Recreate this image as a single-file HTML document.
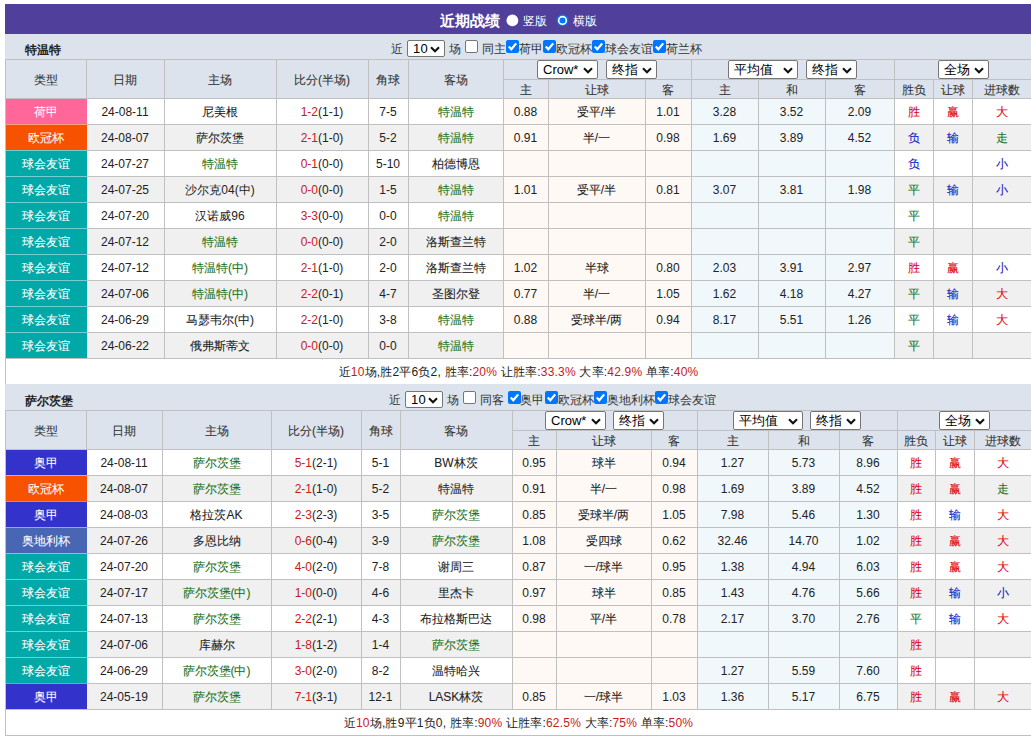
<!DOCTYPE html>
<html><head><meta charset="utf-8"><style>
html,body{margin:0;padding:0;background:#fff;}
body{width:1031px;height:736px;overflow:hidden;position:relative;font-family:"Liberation Sans",sans-serif;font-size:12px;color:#222;}
.r{position:absolute;}
.t{position:absolute;text-align:center;line-height:20px;white-space:nowrap;}
.red{color:#c81a1a;}
.sel{position:absolute;background:#fff;border:1px solid #767676;border-radius:2px;color:#000;}
.sel > span{position:absolute;left:5px;top:0;white-space:nowrap;}
.cb{position:absolute;width:13px;height:13px;box-sizing:border-box;border-radius:2px;}
.cb.off{background:#fff;border:1px solid #767676;}
.cb.on{background:#0075ff;}
.cb svg{position:absolute;left:0;top:0;}
.radio{position:absolute;width:13px;height:13px;box-sizing:border-box;border-radius:50%;background:#fff;border:1px solid #767676;}
.radio.on{border:2px solid #0075ff;background:#fff;}
</style></head><body>
<div class="r" style="left:5px;top:4px;width:1026px;height:30px;background:#51409b;"></div><div class="t" style="left:440px;top:10px;text-align:left;color:#fff;font-size:15px;font-weight:bold;line-height:21px">近期战绩</div><svg class="r" style="left:506px;top:14px" width="13" height="13" viewBox="0 0 13 13"><circle cx="6.4" cy="6.4" r="5.9" fill="#fff"/></svg><div class="t" style="left:523px;top:12px;text-align:left;color:#fff;line-height:18px">竖版</div><svg class="r" style="left:556px;top:14px" width="13" height="13" viewBox="0 0 13 13"><circle cx="6.5" cy="6.4" r="5.9" fill="#0075ff"/><circle cx="6.5" cy="6.4" r="4.6" fill="#fff"/><circle cx="6.5" cy="6.4" r="3" fill="#0075ff"/></svg><div class="t" style="left:573px;top:12px;text-align:left;color:#fff;line-height:18px">横版</div><div class="r" style="left:5px;top:34px;width:1026px;height:25px;background:#dce3ec;"></div><div class="t" style="left:25px;top:40.0px;text-align:left;font-weight:bold;color:#222">特温特</div><div class="t" style="left:391px;top:40.0px;text-align:left;line-height:18px;color:#333">近</div><div class="sel" style="left:407px;top:40px;width:36px;height:15px;"><span style="font-size:13px;line-height:15px"><span style="letter-spacing:0.3px">10</span></span><svg width="10" height="7" viewBox="0 0 10 7" style="position:absolute;right:4px;top:4.5px"><polyline points="1,1.2 5,5.2 9,1.2" fill="none" stroke="#111" stroke-width="2.1"/></svg></div><div class="t" style="left:449px;top:40.0px;text-align:left;line-height:18px;color:#333">场</div><div class="cb off" style="left:465px;top:40px"></div><div class="t" style="left:482px;top:40.0px;text-align:left;line-height:18px;color:#333">同主</div><div class="cb on" style="left:506px;top:40px"><svg width="13" height="13" viewBox="0 0 13 13"><polyline points="2.8,6.6 5.3,9.3 10.2,3.4" fill="none" stroke="#fff" stroke-width="2.2"/></svg></div><div class="t" style="left:519px;top:40.0px;text-align:left;line-height:18px;color:#333">荷甲</div><div class="cb on" style="left:543px;top:40px"><svg width="13" height="13" viewBox="0 0 13 13"><polyline points="2.8,6.6 5.3,9.3 10.2,3.4" fill="none" stroke="#fff" stroke-width="2.2"/></svg></div><div class="t" style="left:556px;top:40.0px;text-align:left;line-height:18px;color:#333">欧冠杯</div><div class="cb on" style="left:592px;top:40px"><svg width="13" height="13" viewBox="0 0 13 13"><polyline points="2.8,6.6 5.3,9.3 10.2,3.4" fill="none" stroke="#fff" stroke-width="2.2"/></svg></div><div class="t" style="left:605px;top:40.0px;text-align:left;line-height:18px;color:#333">球会友谊</div><div class="cb on" style="left:653px;top:40px"><svg width="13" height="13" viewBox="0 0 13 13"><polyline points="2.8,6.6 5.3,9.3 10.2,3.4" fill="none" stroke="#fff" stroke-width="2.2"/></svg></div><div class="t" style="left:666px;top:40.0px;text-align:left;line-height:18px;color:#333">荷兰杯</div><div class="r" style="left:5px;top:59px;width:1026px;height:39px;background:#dce3ec;"></div><div class="r" style="left:86px;top:98px;width:417px;height:26px;background:#ffffff;"></div><div class="r" style="left:503px;top:98px;width:188px;height:26px;background:#fff9f5;"></div><div class="r" style="left:691px;top:98px;width:203px;height:26px;background:#f0f8fc;"></div><div class="r" style="left:894px;top:98px;width:137px;height:26px;background:#ffffff;"></div><div class="r" style="left:5px;top:98px;width:82px;height:27px;background:#ff6699;"></div><div class="r" style="left:86px;top:124px;width:417px;height:26px;background:#f0f0f0;"></div><div class="r" style="left:503px;top:124px;width:188px;height:26px;background:#fff9f5;"></div><div class="r" style="left:691px;top:124px;width:203px;height:26px;background:#f0f8fc;"></div><div class="r" style="left:894px;top:124px;width:137px;height:26px;background:#f0f0f0;"></div><div class="r" style="left:5px;top:124px;width:82px;height:27px;background:#f75200;"></div><div class="r" style="left:86px;top:150px;width:417px;height:26px;background:#ffffff;"></div><div class="r" style="left:503px;top:150px;width:188px;height:26px;background:#fff9f5;"></div><div class="r" style="left:691px;top:150px;width:203px;height:26px;background:#f0f8fc;"></div><div class="r" style="left:894px;top:150px;width:137px;height:26px;background:#ffffff;"></div><div class="r" style="left:5px;top:150px;width:82px;height:27px;background:#00a8a8;"></div><div class="r" style="left:86px;top:176px;width:417px;height:26px;background:#f0f0f0;"></div><div class="r" style="left:503px;top:176px;width:188px;height:26px;background:#fff9f5;"></div><div class="r" style="left:691px;top:176px;width:203px;height:26px;background:#f0f8fc;"></div><div class="r" style="left:894px;top:176px;width:137px;height:26px;background:#f0f0f0;"></div><div class="r" style="left:5px;top:176px;width:82px;height:27px;background:#00a8a8;"></div><div class="r" style="left:86px;top:202px;width:417px;height:26px;background:#ffffff;"></div><div class="r" style="left:503px;top:202px;width:188px;height:26px;background:#fff9f5;"></div><div class="r" style="left:691px;top:202px;width:203px;height:26px;background:#f0f8fc;"></div><div class="r" style="left:894px;top:202px;width:137px;height:26px;background:#ffffff;"></div><div class="r" style="left:5px;top:202px;width:82px;height:27px;background:#00a8a8;"></div><div class="r" style="left:86px;top:228px;width:417px;height:26px;background:#f0f0f0;"></div><div class="r" style="left:503px;top:228px;width:188px;height:26px;background:#fff9f5;"></div><div class="r" style="left:691px;top:228px;width:203px;height:26px;background:#f0f8fc;"></div><div class="r" style="left:894px;top:228px;width:137px;height:26px;background:#f0f0f0;"></div><div class="r" style="left:5px;top:228px;width:82px;height:27px;background:#00a8a8;"></div><div class="r" style="left:86px;top:254px;width:417px;height:26px;background:#ffffff;"></div><div class="r" style="left:503px;top:254px;width:188px;height:26px;background:#fff9f5;"></div><div class="r" style="left:691px;top:254px;width:203px;height:26px;background:#f0f8fc;"></div><div class="r" style="left:894px;top:254px;width:137px;height:26px;background:#ffffff;"></div><div class="r" style="left:5px;top:254px;width:82px;height:27px;background:#00a8a8;"></div><div class="r" style="left:86px;top:280px;width:417px;height:26px;background:#f0f0f0;"></div><div class="r" style="left:503px;top:280px;width:188px;height:26px;background:#fff9f5;"></div><div class="r" style="left:691px;top:280px;width:203px;height:26px;background:#f0f8fc;"></div><div class="r" style="left:894px;top:280px;width:137px;height:26px;background:#f0f0f0;"></div><div class="r" style="left:5px;top:280px;width:82px;height:27px;background:#00a8a8;"></div><div class="r" style="left:86px;top:306px;width:417px;height:26px;background:#ffffff;"></div><div class="r" style="left:503px;top:306px;width:188px;height:26px;background:#fff9f5;"></div><div class="r" style="left:691px;top:306px;width:203px;height:26px;background:#f0f8fc;"></div><div class="r" style="left:894px;top:306px;width:137px;height:26px;background:#ffffff;"></div><div class="r" style="left:5px;top:306px;width:82px;height:27px;background:#00a8a8;"></div><div class="r" style="left:86px;top:332px;width:417px;height:26px;background:#f0f0f0;"></div><div class="r" style="left:503px;top:332px;width:188px;height:26px;background:#fff9f5;"></div><div class="r" style="left:691px;top:332px;width:203px;height:26px;background:#f0f8fc;"></div><div class="r" style="left:894px;top:332px;width:137px;height:26px;background:#f0f0f0;"></div><div class="r" style="left:5px;top:332px;width:82px;height:27px;background:#00a8a8;"></div><div class="r" style="left:5px;top:59px;width:1026px;height:1px;background:#c0c0c0"></div><div class="r" style="left:503px;top:79px;width:528px;height:1px;background:#c0c0c0"></div><div class="r" style="left:5px;top:98px;width:1026px;height:1px;background:#c0c0c0"></div><div class="r" style="left:5px;top:124px;width:1026px;height:1px;background:#c0c0c0"></div><div class="r" style="left:5px;top:150px;width:1026px;height:1px;background:#c0c0c0"></div><div class="r" style="left:5px;top:176px;width:1026px;height:1px;background:#c0c0c0"></div><div class="r" style="left:5px;top:202px;width:1026px;height:1px;background:#c0c0c0"></div><div class="r" style="left:5px;top:228px;width:1026px;height:1px;background:#c0c0c0"></div><div class="r" style="left:5px;top:254px;width:1026px;height:1px;background:#c0c0c0"></div><div class="r" style="left:5px;top:280px;width:1026px;height:1px;background:#c0c0c0"></div><div class="r" style="left:5px;top:306px;width:1026px;height:1px;background:#c0c0c0"></div><div class="r" style="left:5px;top:332px;width:1026px;height:1px;background:#c0c0c0"></div><div class="r" style="left:5px;top:358px;width:1026px;height:1px;background:#c0c0c0"></div><div class="r" style="left:5px;top:384px;width:1026px;height:1px;background:#c0c0c0"></div><div class="r" style="left:5px;top:59px;width:1px;height:326px;background:#c0c0c0"></div><div class="r" style="left:86px;top:59px;width:1px;height:299px;background:#c0c0c0"></div><div class="r" style="left:164px;top:59px;width:1px;height:299px;background:#c0c0c0"></div><div class="r" style="left:276px;top:59px;width:1px;height:299px;background:#c0c0c0"></div><div class="r" style="left:368px;top:59px;width:1px;height:299px;background:#c0c0c0"></div><div class="r" style="left:408px;top:59px;width:1px;height:299px;background:#c0c0c0"></div><div class="r" style="left:503px;top:59px;width:1px;height:299px;background:#c0c0c0"></div><div class="r" style="left:548px;top:79px;width:1px;height:279px;background:#c0c0c0"></div><div class="r" style="left:645px;top:79px;width:1px;height:279px;background:#c0c0c0"></div><div class="r" style="left:691px;top:59px;width:1px;height:299px;background:#c0c0c0"></div><div class="r" style="left:758px;top:79px;width:1px;height:279px;background:#c0c0c0"></div><div class="r" style="left:825px;top:79px;width:1px;height:279px;background:#c0c0c0"></div><div class="r" style="left:894px;top:59px;width:1px;height:299px;background:#c0c0c0"></div><div class="r" style="left:933px;top:79px;width:1px;height:279px;background:#c0c0c0"></div><div class="r" style="left:972px;top:79px;width:1px;height:279px;background:#c0c0c0"></div><div class="r" style="left:6px;top:99px;width:81px;height:25px;background:#ff6699;"></div><div class="r" style="left:6px;top:125px;width:81px;height:25px;background:#f75200;"></div><div class="r" style="left:6px;top:124px;width:81px;height:1px;background:#f75200;"></div><div class="r" style="left:6px;top:124px;width:81px;height:1px;background:rgba(255,255,255,0.45);"></div><div class="r" style="left:6px;top:151px;width:81px;height:25px;background:#00a8a8;"></div><div class="r" style="left:6px;top:150px;width:81px;height:1px;background:#00a8a8;"></div><div class="r" style="left:6px;top:150px;width:81px;height:1px;background:rgba(255,255,255,0.45);"></div><div class="r" style="left:6px;top:177px;width:81px;height:25px;background:#00a8a8;"></div><div class="r" style="left:6px;top:176px;width:81px;height:1px;background:#00a8a8;"></div><div class="r" style="left:6px;top:176px;width:81px;height:1px;background:rgba(255,255,255,0.45);"></div><div class="r" style="left:6px;top:203px;width:81px;height:25px;background:#00a8a8;"></div><div class="r" style="left:6px;top:202px;width:81px;height:1px;background:#00a8a8;"></div><div class="r" style="left:6px;top:202px;width:81px;height:1px;background:rgba(255,255,255,0.45);"></div><div class="r" style="left:6px;top:229px;width:81px;height:25px;background:#00a8a8;"></div><div class="r" style="left:6px;top:228px;width:81px;height:1px;background:#00a8a8;"></div><div class="r" style="left:6px;top:228px;width:81px;height:1px;background:rgba(255,255,255,0.45);"></div><div class="r" style="left:6px;top:255px;width:81px;height:25px;background:#00a8a8;"></div><div class="r" style="left:6px;top:254px;width:81px;height:1px;background:#00a8a8;"></div><div class="r" style="left:6px;top:254px;width:81px;height:1px;background:rgba(255,255,255,0.45);"></div><div class="r" style="left:6px;top:281px;width:81px;height:25px;background:#00a8a8;"></div><div class="r" style="left:6px;top:280px;width:81px;height:1px;background:#00a8a8;"></div><div class="r" style="left:6px;top:280px;width:81px;height:1px;background:rgba(255,255,255,0.45);"></div><div class="r" style="left:6px;top:307px;width:81px;height:25px;background:#00a8a8;"></div><div class="r" style="left:6px;top:306px;width:81px;height:1px;background:#00a8a8;"></div><div class="r" style="left:6px;top:306px;width:81px;height:1px;background:rgba(255,255,255,0.45);"></div><div class="r" style="left:6px;top:333px;width:81px;height:25px;background:#00a8a8;"></div><div class="r" style="left:6px;top:332px;width:81px;height:1px;background:#00a8a8;"></div><div class="r" style="left:6px;top:332px;width:81px;height:1px;background:rgba(255,255,255,0.45);"></div><div class="t" style="left:-154.5px;top:69.5px;width:400px;color:#333;-webkit-text-stroke:0.08px currentColor">类型</div><div class="t" style="left:-75.0px;top:69.5px;width:400px;color:#333;-webkit-text-stroke:0.08px currentColor">日期</div><div class="t" style="left:20.0px;top:69.5px;width:400px;color:#333;-webkit-text-stroke:0.08px currentColor">主场</div><div class="t" style="left:122.0px;top:69.5px;width:400px;color:#333;-webkit-text-stroke:0.08px currentColor">比分(半场)</div><div class="t" style="left:188.0px;top:69.5px;width:400px;color:#333;-webkit-text-stroke:0.08px currentColor">角球</div><div class="t" style="left:255.5px;top:69.5px;width:400px;color:#333;-webkit-text-stroke:0.08px currentColor">客场</div><div class="t" style="left:325.5px;top:79.5px;width:400px;color:#333;-webkit-text-stroke:0.08px currentColor">主</div><div class="t" style="left:396.5px;top:79.5px;width:400px;color:#333;-webkit-text-stroke:0.08px currentColor">让球</div><div class="t" style="left:468.0px;top:79.5px;width:400px;color:#333;-webkit-text-stroke:0.08px currentColor">客</div><div class="t" style="left:524.5px;top:79.5px;width:400px;color:#333;-webkit-text-stroke:0.08px currentColor">主</div><div class="t" style="left:591.5px;top:79.5px;width:400px;color:#333;-webkit-text-stroke:0.08px currentColor">和</div><div class="t" style="left:659.5px;top:79.5px;width:400px;color:#333;-webkit-text-stroke:0.08px currentColor">客</div><div class="t" style="left:713.5px;top:79.5px;width:400px;color:#333;-webkit-text-stroke:0.08px currentColor">胜负</div><div class="t" style="left:752.5px;top:79.5px;width:400px;color:#333;-webkit-text-stroke:0.08px currentColor">让球</div><div class="t" style="left:802.0px;top:79.5px;width:400px;color:#333;-webkit-text-stroke:0.08px currentColor">进球数</div><div class="sel" style="left:537px;top:60px;width:59px;height:17px;"><span style="font-size:13px;line-height:17px">Crow*</span><svg width="10" height="7" viewBox="0 0 10 7" style="position:absolute;right:4px;top:5.5px"><polyline points="1,1.2 5,5.2 9,1.2" fill="none" stroke="#111" stroke-width="2.1"/></svg></div><div class="sel" style="left:606px;top:60px;width:49px;height:17px;"><span style="font-size:13px;line-height:17px">终指</span><svg width="10" height="7" viewBox="0 0 10 7" style="position:absolute;right:4px;top:5.5px"><polyline points="1,1.2 5,5.2 9,1.2" fill="none" stroke="#111" stroke-width="2.1"/></svg></div><div class="sel" style="left:728px;top:60px;width:68px;height:17px;"><span style="font-size:13px;line-height:17px">平均值</span><svg width="10" height="7" viewBox="0 0 10 7" style="position:absolute;right:4px;top:5.5px"><polyline points="1,1.2 5,5.2 9,1.2" fill="none" stroke="#111" stroke-width="2.1"/></svg></div><div class="sel" style="left:806px;top:60px;width:49px;height:17px;"><span style="font-size:13px;line-height:17px">终指</span><svg width="10" height="7" viewBox="0 0 10 7" style="position:absolute;right:4px;top:5.5px"><polyline points="1,1.2 5,5.2 9,1.2" fill="none" stroke="#111" stroke-width="2.1"/></svg></div><div class="sel" style="left:938px;top:60px;width:49px;height:17px;"><span style="font-size:13px;line-height:17px">全场</span><svg width="10" height="7" viewBox="0 0 10 7" style="position:absolute;right:4px;top:5.5px"><polyline points="1,1.2 5,5.2 9,1.2" fill="none" stroke="#111" stroke-width="2.1"/></svg></div><div class="t" style="left:-154.5px;top:102.0px;width:400px;color:#fff;-webkit-text-stroke:0.08px currentColor">荷甲</div><div class="t" style="left:-75.0px;top:102.0px;width:400px;">24-08-11</div><div class="t" style="left:20.0px;top:102.0px;width:400px;;-webkit-text-stroke:0.08px currentColor">尼美根</div><div class="t" style="left:122.0px;top:102.0px;width:400px;"><span style="color:#c81a1a">1-2</span>(1-1)</div><div class="t" style="left:188.0px;top:102.0px;width:400px;">7-5</div><div class="t" style="left:255.5px;top:102.0px;width:400px;color:#187018;-webkit-text-stroke:0.08px currentColor">特温特</div><div class="t" style="left:325.5px;top:102.0px;width:400px;">0.88</div><div class="t" style="left:396.5px;top:102.0px;width:400px;;-webkit-text-stroke:0.08px currentColor">受平/半</div><div class="t" style="left:468.0px;top:102.0px;width:400px;">1.01</div><div class="t" style="left:524.5px;top:102.0px;width:400px;">3.28</div><div class="t" style="left:591.5px;top:102.0px;width:400px;">3.52</div><div class="t" style="left:659.5px;top:102.0px;width:400px;">2.09</div><div class="t" style="left:713.5px;top:102.0px;width:400px;color:#e00000;-webkit-text-stroke:0.08px currentColor">胜</div><div class="t" style="left:752.5px;top:102.0px;width:400px;color:#e00000;-webkit-text-stroke:0.08px currentColor">赢</div><div class="t" style="left:802.0px;top:102.0px;width:400px;color:#e00000;-webkit-text-stroke:0.08px currentColor">大</div><div class="t" style="left:-154.5px;top:128.0px;width:400px;color:#fff;-webkit-text-stroke:0.08px currentColor">欧冠杯</div><div class="t" style="left:-75.0px;top:128.0px;width:400px;">24-08-07</div><div class="t" style="left:20.0px;top:128.0px;width:400px;;-webkit-text-stroke:0.08px currentColor">萨尔茨堡</div><div class="t" style="left:122.0px;top:128.0px;width:400px;"><span style="color:#c81a1a">2-1</span>(1-0)</div><div class="t" style="left:188.0px;top:128.0px;width:400px;">5-2</div><div class="t" style="left:255.5px;top:128.0px;width:400px;color:#187018;-webkit-text-stroke:0.08px currentColor">特温特</div><div class="t" style="left:325.5px;top:128.0px;width:400px;">0.91</div><div class="t" style="left:396.5px;top:128.0px;width:400px;;-webkit-text-stroke:0.08px currentColor">半/一</div><div class="t" style="left:468.0px;top:128.0px;width:400px;">0.98</div><div class="t" style="left:524.5px;top:128.0px;width:400px;">1.69</div><div class="t" style="left:591.5px;top:128.0px;width:400px;">3.89</div><div class="t" style="left:659.5px;top:128.0px;width:400px;">4.52</div><div class="t" style="left:713.5px;top:128.0px;width:400px;color:#1414c8;-webkit-text-stroke:0.08px currentColor">负</div><div class="t" style="left:752.5px;top:128.0px;width:400px;color:#1414c8;-webkit-text-stroke:0.08px currentColor">输</div><div class="t" style="left:802.0px;top:128.0px;width:400px;color:#187018;-webkit-text-stroke:0.08px currentColor">走</div><div class="t" style="left:-154.5px;top:154.0px;width:400px;color:#fff;-webkit-text-stroke:0.08px currentColor">球会友谊</div><div class="t" style="left:-75.0px;top:154.0px;width:400px;">24-07-27</div><div class="t" style="left:20.0px;top:154.0px;width:400px;color:#187018;-webkit-text-stroke:0.08px currentColor">特温特</div><div class="t" style="left:122.0px;top:154.0px;width:400px;"><span style="color:#c81a1a">0-1</span>(0-0)</div><div class="t" style="left:188.0px;top:154.0px;width:400px;">5-10</div><div class="t" style="left:255.5px;top:154.0px;width:400px;;-webkit-text-stroke:0.08px currentColor">柏德博恩</div><div class="t" style="left:325.5px;top:154.0px;width:400px;"></div><div class="t" style="left:396.5px;top:154.0px;width:400px;"></div><div class="t" style="left:468.0px;top:154.0px;width:400px;"></div><div class="t" style="left:524.5px;top:154.0px;width:400px;"></div><div class="t" style="left:591.5px;top:154.0px;width:400px;"></div><div class="t" style="left:659.5px;top:154.0px;width:400px;"></div><div class="t" style="left:713.5px;top:154.0px;width:400px;color:#1414c8;-webkit-text-stroke:0.08px currentColor">负</div><div class="t" style="left:802.0px;top:154.0px;width:400px;color:#1414c8;-webkit-text-stroke:0.08px currentColor">小</div><div class="t" style="left:-154.5px;top:180.0px;width:400px;color:#fff;-webkit-text-stroke:0.08px currentColor">球会友谊</div><div class="t" style="left:-75.0px;top:180.0px;width:400px;">24-07-25</div><div class="t" style="left:20.0px;top:180.0px;width:400px;">沙尔克04(中)</div><div class="t" style="left:122.0px;top:180.0px;width:400px;"><span style="color:#c81a1a">0-0</span>(0-0)</div><div class="t" style="left:188.0px;top:180.0px;width:400px;">1-5</div><div class="t" style="left:255.5px;top:180.0px;width:400px;color:#187018;-webkit-text-stroke:0.08px currentColor">特温特</div><div class="t" style="left:325.5px;top:180.0px;width:400px;">1.01</div><div class="t" style="left:396.5px;top:180.0px;width:400px;;-webkit-text-stroke:0.08px currentColor">受平/半</div><div class="t" style="left:468.0px;top:180.0px;width:400px;">0.81</div><div class="t" style="left:524.5px;top:180.0px;width:400px;">3.07</div><div class="t" style="left:591.5px;top:180.0px;width:400px;">3.81</div><div class="t" style="left:659.5px;top:180.0px;width:400px;">1.98</div><div class="t" style="left:713.5px;top:180.0px;width:400px;color:#187018;-webkit-text-stroke:0.08px currentColor">平</div><div class="t" style="left:752.5px;top:180.0px;width:400px;color:#1414c8;-webkit-text-stroke:0.08px currentColor">输</div><div class="t" style="left:802.0px;top:180.0px;width:400px;color:#1414c8;-webkit-text-stroke:0.08px currentColor">小</div><div class="t" style="left:-154.5px;top:206.0px;width:400px;color:#fff;-webkit-text-stroke:0.08px currentColor">球会友谊</div><div class="t" style="left:-75.0px;top:206.0px;width:400px;">24-07-20</div><div class="t" style="left:20.0px;top:206.0px;width:400px;">汉诺威96</div><div class="t" style="left:122.0px;top:206.0px;width:400px;"><span style="color:#c81a1a">3-3</span>(0-0)</div><div class="t" style="left:188.0px;top:206.0px;width:400px;">0-0</div><div class="t" style="left:255.5px;top:206.0px;width:400px;color:#187018;-webkit-text-stroke:0.08px currentColor">特温特</div><div class="t" style="left:325.5px;top:206.0px;width:400px;"></div><div class="t" style="left:396.5px;top:206.0px;width:400px;"></div><div class="t" style="left:468.0px;top:206.0px;width:400px;"></div><div class="t" style="left:524.5px;top:206.0px;width:400px;"></div><div class="t" style="left:591.5px;top:206.0px;width:400px;"></div><div class="t" style="left:659.5px;top:206.0px;width:400px;"></div><div class="t" style="left:713.5px;top:206.0px;width:400px;color:#187018;-webkit-text-stroke:0.08px currentColor">平</div><div class="t" style="left:-154.5px;top:232.0px;width:400px;color:#fff;-webkit-text-stroke:0.08px currentColor">球会友谊</div><div class="t" style="left:-75.0px;top:232.0px;width:400px;">24-07-12</div><div class="t" style="left:20.0px;top:232.0px;width:400px;color:#187018;-webkit-text-stroke:0.08px currentColor">特温特</div><div class="t" style="left:122.0px;top:232.0px;width:400px;"><span style="color:#c81a1a">0-0</span>(0-0)</div><div class="t" style="left:188.0px;top:232.0px;width:400px;">2-0</div><div class="t" style="left:255.5px;top:232.0px;width:400px;;-webkit-text-stroke:0.08px currentColor">洛斯查兰特</div><div class="t" style="left:325.5px;top:232.0px;width:400px;"></div><div class="t" style="left:396.5px;top:232.0px;width:400px;"></div><div class="t" style="left:468.0px;top:232.0px;width:400px;"></div><div class="t" style="left:524.5px;top:232.0px;width:400px;"></div><div class="t" style="left:591.5px;top:232.0px;width:400px;"></div><div class="t" style="left:659.5px;top:232.0px;width:400px;"></div><div class="t" style="left:713.5px;top:232.0px;width:400px;color:#187018;-webkit-text-stroke:0.08px currentColor">平</div><div class="t" style="left:-154.5px;top:258.0px;width:400px;color:#fff;-webkit-text-stroke:0.08px currentColor">球会友谊</div><div class="t" style="left:-75.0px;top:258.0px;width:400px;">24-07-12</div><div class="t" style="left:20.0px;top:258.0px;width:400px;color:#187018;-webkit-text-stroke:0.08px currentColor">特温特(中)</div><div class="t" style="left:122.0px;top:258.0px;width:400px;"><span style="color:#c81a1a">2-1</span>(1-0)</div><div class="t" style="left:188.0px;top:258.0px;width:400px;">2-0</div><div class="t" style="left:255.5px;top:258.0px;width:400px;;-webkit-text-stroke:0.08px currentColor">洛斯查兰特</div><div class="t" style="left:325.5px;top:258.0px;width:400px;">1.02</div><div class="t" style="left:396.5px;top:258.0px;width:400px;;-webkit-text-stroke:0.08px currentColor">半球</div><div class="t" style="left:468.0px;top:258.0px;width:400px;">0.80</div><div class="t" style="left:524.5px;top:258.0px;width:400px;">2.03</div><div class="t" style="left:591.5px;top:258.0px;width:400px;">3.91</div><div class="t" style="left:659.5px;top:258.0px;width:400px;">2.97</div><div class="t" style="left:713.5px;top:258.0px;width:400px;color:#e00000;-webkit-text-stroke:0.08px currentColor">胜</div><div class="t" style="left:752.5px;top:258.0px;width:400px;color:#e00000;-webkit-text-stroke:0.08px currentColor">赢</div><div class="t" style="left:802.0px;top:258.0px;width:400px;color:#1414c8;-webkit-text-stroke:0.08px currentColor">小</div><div class="t" style="left:-154.5px;top:284.0px;width:400px;color:#fff;-webkit-text-stroke:0.08px currentColor">球会友谊</div><div class="t" style="left:-75.0px;top:284.0px;width:400px;">24-07-06</div><div class="t" style="left:20.0px;top:284.0px;width:400px;color:#187018;-webkit-text-stroke:0.08px currentColor">特温特(中)</div><div class="t" style="left:122.0px;top:284.0px;width:400px;"><span style="color:#c81a1a">2-2</span>(0-1)</div><div class="t" style="left:188.0px;top:284.0px;width:400px;">4-7</div><div class="t" style="left:255.5px;top:284.0px;width:400px;;-webkit-text-stroke:0.08px currentColor">圣图尔登</div><div class="t" style="left:325.5px;top:284.0px;width:400px;">0.77</div><div class="t" style="left:396.5px;top:284.0px;width:400px;;-webkit-text-stroke:0.08px currentColor">半/一</div><div class="t" style="left:468.0px;top:284.0px;width:400px;">1.05</div><div class="t" style="left:524.5px;top:284.0px;width:400px;">1.62</div><div class="t" style="left:591.5px;top:284.0px;width:400px;">4.18</div><div class="t" style="left:659.5px;top:284.0px;width:400px;">4.27</div><div class="t" style="left:713.5px;top:284.0px;width:400px;color:#187018;-webkit-text-stroke:0.08px currentColor">平</div><div class="t" style="left:752.5px;top:284.0px;width:400px;color:#1414c8;-webkit-text-stroke:0.08px currentColor">输</div><div class="t" style="left:802.0px;top:284.0px;width:400px;color:#e00000;-webkit-text-stroke:0.08px currentColor">大</div><div class="t" style="left:-154.5px;top:310.0px;width:400px;color:#fff;-webkit-text-stroke:0.08px currentColor">球会友谊</div><div class="t" style="left:-75.0px;top:310.0px;width:400px;">24-06-29</div><div class="t" style="left:20.0px;top:310.0px;width:400px;;-webkit-text-stroke:0.08px currentColor">马瑟韦尔(中)</div><div class="t" style="left:122.0px;top:310.0px;width:400px;"><span style="color:#c81a1a">2-2</span>(1-0)</div><div class="t" style="left:188.0px;top:310.0px;width:400px;">3-8</div><div class="t" style="left:255.5px;top:310.0px;width:400px;color:#187018;-webkit-text-stroke:0.08px currentColor">特温特</div><div class="t" style="left:325.5px;top:310.0px;width:400px;">0.88</div><div class="t" style="left:396.5px;top:310.0px;width:400px;;-webkit-text-stroke:0.08px currentColor">受球半/两</div><div class="t" style="left:468.0px;top:310.0px;width:400px;">0.94</div><div class="t" style="left:524.5px;top:310.0px;width:400px;">8.17</div><div class="t" style="left:591.5px;top:310.0px;width:400px;">5.51</div><div class="t" style="left:659.5px;top:310.0px;width:400px;">1.26</div><div class="t" style="left:713.5px;top:310.0px;width:400px;color:#187018;-webkit-text-stroke:0.08px currentColor">平</div><div class="t" style="left:752.5px;top:310.0px;width:400px;color:#1414c8;-webkit-text-stroke:0.08px currentColor">输</div><div class="t" style="left:802.0px;top:310.0px;width:400px;color:#e00000;-webkit-text-stroke:0.08px currentColor">大</div><div class="t" style="left:-154.5px;top:336.0px;width:400px;color:#fff;-webkit-text-stroke:0.08px currentColor">球会友谊</div><div class="t" style="left:-75.0px;top:336.0px;width:400px;">24-06-22</div><div class="t" style="left:20.0px;top:336.0px;width:400px;;-webkit-text-stroke:0.08px currentColor">俄弗斯蒂文</div><div class="t" style="left:122.0px;top:336.0px;width:400px;"><span style="color:#c81a1a">0-0</span>(0-0)</div><div class="t" style="left:188.0px;top:336.0px;width:400px;">0-0</div><div class="t" style="left:255.5px;top:336.0px;width:400px;color:#187018;-webkit-text-stroke:0.08px currentColor">特温特</div><div class="t" style="left:325.5px;top:336.0px;width:400px;"></div><div class="t" style="left:396.5px;top:336.0px;width:400px;"></div><div class="t" style="left:468.0px;top:336.0px;width:400px;"></div><div class="t" style="left:524.5px;top:336.0px;width:400px;"></div><div class="t" style="left:591.5px;top:336.0px;width:400px;"></div><div class="t" style="left:659.5px;top:336.0px;width:400px;"></div><div class="t" style="left:713.5px;top:336.0px;width:400px;color:#187018;-webkit-text-stroke:0.08px currentColor">平</div><div class="t" style="left:318.5px;top:362.0px;width:400px;letter-spacing:0.2px">近<span class="red">10</span>场,胜2平6负2, 胜率:<span class="red">20%</span> 让胜率:<span class="red">33.3%</span> 大率:<span class="red">42.9%</span> 单率:<span class="red">40%</span></div><div class="r" style="left:5px;top:384px;width:1026px;height:26px;background:#dce3ec;"></div><div class="t" style="left:25px;top:390.5px;text-align:left;font-weight:bold;color:#222">萨尔茨堡</div><div class="t" style="left:389px;top:390.5px;text-align:left;line-height:18px;color:#333">近</div><div class="sel" style="left:405px;top:391px;width:36px;height:15px;"><span style="font-size:13px;line-height:15px"><span style="letter-spacing:0.3px">10</span></span><svg width="10" height="7" viewBox="0 0 10 7" style="position:absolute;right:4px;top:4.5px"><polyline points="1,1.2 5,5.2 9,1.2" fill="none" stroke="#111" stroke-width="2.1"/></svg></div><div class="t" style="left:447px;top:390.5px;text-align:left;line-height:18px;color:#333">场</div><div class="cb off" style="left:463px;top:391px"></div><div class="t" style="left:480px;top:390.5px;text-align:left;line-height:18px;color:#333">同客</div><div class="cb on" style="left:508px;top:391px"><svg width="13" height="13" viewBox="0 0 13 13"><polyline points="2.8,6.6 5.3,9.3 10.2,3.4" fill="none" stroke="#fff" stroke-width="2.2"/></svg></div><div class="t" style="left:520px;top:390.5px;text-align:left;line-height:18px;color:#333">奥甲</div><div class="cb on" style="left:545px;top:391px"><svg width="13" height="13" viewBox="0 0 13 13"><polyline points="2.8,6.6 5.3,9.3 10.2,3.4" fill="none" stroke="#fff" stroke-width="2.2"/></svg></div><div class="t" style="left:558px;top:390.5px;text-align:left;line-height:18px;color:#333">欧冠杯</div><div class="cb on" style="left:594px;top:391px"><svg width="13" height="13" viewBox="0 0 13 13"><polyline points="2.8,6.6 5.3,9.3 10.2,3.4" fill="none" stroke="#fff" stroke-width="2.2"/></svg></div><div class="t" style="left:607px;top:390.5px;text-align:left;line-height:18px;color:#333">奥地利杯</div><div class="cb on" style="left:655px;top:391px"><svg width="13" height="13" viewBox="0 0 13 13"><polyline points="2.8,6.6 5.3,9.3 10.2,3.4" fill="none" stroke="#fff" stroke-width="2.2"/></svg></div><div class="t" style="left:668px;top:390.5px;text-align:left;line-height:18px;color:#333">球会友谊</div><div class="r" style="left:5px;top:410px;width:1026px;height:39px;background:#dce3ec;"></div><div class="r" style="left:86px;top:449px;width:426px;height:26px;background:#ffffff;"></div><div class="r" style="left:512px;top:449px;width:185px;height:26px;background:#fff9f5;"></div><div class="r" style="left:697px;top:449px;width:200px;height:26px;background:#f0f8fc;"></div><div class="r" style="left:897px;top:449px;width:134px;height:26px;background:#ffffff;"></div><div class="r" style="left:5px;top:449px;width:82px;height:27px;background:#3333cc;"></div><div class="r" style="left:86px;top:475px;width:426px;height:26px;background:#f0f0f0;"></div><div class="r" style="left:512px;top:475px;width:185px;height:26px;background:#fff9f5;"></div><div class="r" style="left:697px;top:475px;width:200px;height:26px;background:#f0f8fc;"></div><div class="r" style="left:897px;top:475px;width:134px;height:26px;background:#f0f0f0;"></div><div class="r" style="left:5px;top:475px;width:82px;height:27px;background:#f75200;"></div><div class="r" style="left:86px;top:501px;width:426px;height:26px;background:#ffffff;"></div><div class="r" style="left:512px;top:501px;width:185px;height:26px;background:#fff9f5;"></div><div class="r" style="left:697px;top:501px;width:200px;height:26px;background:#f0f8fc;"></div><div class="r" style="left:897px;top:501px;width:134px;height:26px;background:#ffffff;"></div><div class="r" style="left:5px;top:501px;width:82px;height:27px;background:#3333cc;"></div><div class="r" style="left:86px;top:527px;width:426px;height:26px;background:#f0f0f0;"></div><div class="r" style="left:512px;top:527px;width:185px;height:26px;background:#fff9f5;"></div><div class="r" style="left:697px;top:527px;width:200px;height:26px;background:#f0f8fc;"></div><div class="r" style="left:897px;top:527px;width:134px;height:26px;background:#f0f0f0;"></div><div class="r" style="left:5px;top:527px;width:82px;height:27px;background:#4866b4;"></div><div class="r" style="left:86px;top:553px;width:426px;height:26px;background:#ffffff;"></div><div class="r" style="left:512px;top:553px;width:185px;height:26px;background:#fff9f5;"></div><div class="r" style="left:697px;top:553px;width:200px;height:26px;background:#f0f8fc;"></div><div class="r" style="left:897px;top:553px;width:134px;height:26px;background:#ffffff;"></div><div class="r" style="left:5px;top:553px;width:82px;height:27px;background:#00a8a8;"></div><div class="r" style="left:86px;top:579px;width:426px;height:26px;background:#f0f0f0;"></div><div class="r" style="left:512px;top:579px;width:185px;height:26px;background:#fff9f5;"></div><div class="r" style="left:697px;top:579px;width:200px;height:26px;background:#f0f8fc;"></div><div class="r" style="left:897px;top:579px;width:134px;height:26px;background:#f0f0f0;"></div><div class="r" style="left:5px;top:579px;width:82px;height:27px;background:#00a8a8;"></div><div class="r" style="left:86px;top:605px;width:426px;height:26px;background:#ffffff;"></div><div class="r" style="left:512px;top:605px;width:185px;height:26px;background:#fff9f5;"></div><div class="r" style="left:697px;top:605px;width:200px;height:26px;background:#f0f8fc;"></div><div class="r" style="left:897px;top:605px;width:134px;height:26px;background:#ffffff;"></div><div class="r" style="left:5px;top:605px;width:82px;height:27px;background:#00a8a8;"></div><div class="r" style="left:86px;top:631px;width:426px;height:26px;background:#f0f0f0;"></div><div class="r" style="left:512px;top:631px;width:185px;height:26px;background:#fff9f5;"></div><div class="r" style="left:697px;top:631px;width:200px;height:26px;background:#f0f8fc;"></div><div class="r" style="left:897px;top:631px;width:134px;height:26px;background:#f0f0f0;"></div><div class="r" style="left:5px;top:631px;width:82px;height:27px;background:#00a8a8;"></div><div class="r" style="left:86px;top:657px;width:426px;height:26px;background:#ffffff;"></div><div class="r" style="left:512px;top:657px;width:185px;height:26px;background:#fff9f5;"></div><div class="r" style="left:697px;top:657px;width:200px;height:26px;background:#f0f8fc;"></div><div class="r" style="left:897px;top:657px;width:134px;height:26px;background:#ffffff;"></div><div class="r" style="left:5px;top:657px;width:82px;height:27px;background:#00a8a8;"></div><div class="r" style="left:86px;top:683px;width:426px;height:26px;background:#f0f0f0;"></div><div class="r" style="left:512px;top:683px;width:185px;height:26px;background:#fff9f5;"></div><div class="r" style="left:697px;top:683px;width:200px;height:26px;background:#f0f8fc;"></div><div class="r" style="left:897px;top:683px;width:134px;height:26px;background:#f0f0f0;"></div><div class="r" style="left:5px;top:683px;width:82px;height:27px;background:#3333cc;"></div><div class="r" style="left:5px;top:410px;width:1026px;height:1px;background:#c0c0c0"></div><div class="r" style="left:512px;top:430px;width:519px;height:1px;background:#c0c0c0"></div><div class="r" style="left:5px;top:449px;width:1026px;height:1px;background:#c0c0c0"></div><div class="r" style="left:5px;top:475px;width:1026px;height:1px;background:#c0c0c0"></div><div class="r" style="left:5px;top:501px;width:1026px;height:1px;background:#c0c0c0"></div><div class="r" style="left:5px;top:527px;width:1026px;height:1px;background:#c0c0c0"></div><div class="r" style="left:5px;top:553px;width:1026px;height:1px;background:#c0c0c0"></div><div class="r" style="left:5px;top:579px;width:1026px;height:1px;background:#c0c0c0"></div><div class="r" style="left:5px;top:605px;width:1026px;height:1px;background:#c0c0c0"></div><div class="r" style="left:5px;top:631px;width:1026px;height:1px;background:#c0c0c0"></div><div class="r" style="left:5px;top:657px;width:1026px;height:1px;background:#c0c0c0"></div><div class="r" style="left:5px;top:683px;width:1026px;height:1px;background:#c0c0c0"></div><div class="r" style="left:5px;top:709px;width:1026px;height:1px;background:#c0c0c0"></div><div class="r" style="left:5px;top:735px;width:1026px;height:1px;background:#c0c0c0"></div><div class="r" style="left:5px;top:410px;width:1px;height:326px;background:#c0c0c0"></div><div class="r" style="left:86px;top:410px;width:1px;height:299px;background:#c0c0c0"></div><div class="r" style="left:162px;top:410px;width:1px;height:299px;background:#c0c0c0"></div><div class="r" style="left:271px;top:410px;width:1px;height:299px;background:#c0c0c0"></div><div class="r" style="left:361px;top:410px;width:1px;height:299px;background:#c0c0c0"></div><div class="r" style="left:400px;top:410px;width:1px;height:299px;background:#c0c0c0"></div><div class="r" style="left:512px;top:410px;width:1px;height:299px;background:#c0c0c0"></div><div class="r" style="left:556px;top:430px;width:1px;height:279px;background:#c0c0c0"></div><div class="r" style="left:651px;top:430px;width:1px;height:279px;background:#c0c0c0"></div><div class="r" style="left:697px;top:410px;width:1px;height:299px;background:#c0c0c0"></div><div class="r" style="left:768px;top:430px;width:1px;height:279px;background:#c0c0c0"></div><div class="r" style="left:839px;top:430px;width:1px;height:279px;background:#c0c0c0"></div><div class="r" style="left:897px;top:410px;width:1px;height:299px;background:#c0c0c0"></div><div class="r" style="left:935px;top:430px;width:1px;height:279px;background:#c0c0c0"></div><div class="r" style="left:974px;top:430px;width:1px;height:279px;background:#c0c0c0"></div><div class="r" style="left:6px;top:450px;width:81px;height:25px;background:#3333cc;"></div><div class="r" style="left:6px;top:476px;width:81px;height:25px;background:#f75200;"></div><div class="r" style="left:6px;top:475px;width:81px;height:1px;background:#f75200;"></div><div class="r" style="left:6px;top:475px;width:81px;height:1px;background:rgba(255,255,255,0.45);"></div><div class="r" style="left:6px;top:502px;width:81px;height:25px;background:#3333cc;"></div><div class="r" style="left:6px;top:501px;width:81px;height:1px;background:#3333cc;"></div><div class="r" style="left:6px;top:501px;width:81px;height:1px;background:rgba(255,255,255,0.45);"></div><div class="r" style="left:6px;top:528px;width:81px;height:25px;background:#4866b4;"></div><div class="r" style="left:6px;top:527px;width:81px;height:1px;background:#4866b4;"></div><div class="r" style="left:6px;top:527px;width:81px;height:1px;background:rgba(255,255,255,0.45);"></div><div class="r" style="left:6px;top:554px;width:81px;height:25px;background:#00a8a8;"></div><div class="r" style="left:6px;top:553px;width:81px;height:1px;background:#00a8a8;"></div><div class="r" style="left:6px;top:553px;width:81px;height:1px;background:rgba(255,255,255,0.45);"></div><div class="r" style="left:6px;top:580px;width:81px;height:25px;background:#00a8a8;"></div><div class="r" style="left:6px;top:579px;width:81px;height:1px;background:#00a8a8;"></div><div class="r" style="left:6px;top:579px;width:81px;height:1px;background:rgba(255,255,255,0.45);"></div><div class="r" style="left:6px;top:606px;width:81px;height:25px;background:#00a8a8;"></div><div class="r" style="left:6px;top:605px;width:81px;height:1px;background:#00a8a8;"></div><div class="r" style="left:6px;top:605px;width:81px;height:1px;background:rgba(255,255,255,0.45);"></div><div class="r" style="left:6px;top:632px;width:81px;height:25px;background:#00a8a8;"></div><div class="r" style="left:6px;top:631px;width:81px;height:1px;background:#00a8a8;"></div><div class="r" style="left:6px;top:631px;width:81px;height:1px;background:rgba(255,255,255,0.45);"></div><div class="r" style="left:6px;top:658px;width:81px;height:25px;background:#00a8a8;"></div><div class="r" style="left:6px;top:657px;width:81px;height:1px;background:#00a8a8;"></div><div class="r" style="left:6px;top:657px;width:81px;height:1px;background:rgba(255,255,255,0.45);"></div><div class="r" style="left:6px;top:684px;width:81px;height:25px;background:#3333cc;"></div><div class="r" style="left:6px;top:683px;width:81px;height:1px;background:#3333cc;"></div><div class="r" style="left:6px;top:683px;width:81px;height:1px;background:rgba(255,255,255,0.45);"></div><div class="t" style="left:-154.5px;top:420.5px;width:400px;color:#333;-webkit-text-stroke:0.08px currentColor">类型</div><div class="t" style="left:-76.0px;top:420.5px;width:400px;color:#333;-webkit-text-stroke:0.08px currentColor">日期</div><div class="t" style="left:16.5px;top:420.5px;width:400px;color:#333;-webkit-text-stroke:0.08px currentColor">主场</div><div class="t" style="left:116.0px;top:420.5px;width:400px;color:#333;-webkit-text-stroke:0.08px currentColor">比分(半场)</div><div class="t" style="left:180.5px;top:420.5px;width:400px;color:#333;-webkit-text-stroke:0.08px currentColor">角球</div><div class="t" style="left:256.0px;top:420.5px;width:400px;color:#333;-webkit-text-stroke:0.08px currentColor">客场</div><div class="t" style="left:334.0px;top:430.5px;width:400px;color:#333;-webkit-text-stroke:0.08px currentColor">主</div><div class="t" style="left:403.5px;top:430.5px;width:400px;color:#333;-webkit-text-stroke:0.08px currentColor">让球</div><div class="t" style="left:474.0px;top:430.5px;width:400px;color:#333;-webkit-text-stroke:0.08px currentColor">客</div><div class="t" style="left:532.5px;top:430.5px;width:400px;color:#333;-webkit-text-stroke:0.08px currentColor">主</div><div class="t" style="left:603.5px;top:430.5px;width:400px;color:#333;-webkit-text-stroke:0.08px currentColor">和</div><div class="t" style="left:668.0px;top:430.5px;width:400px;color:#333;-webkit-text-stroke:0.08px currentColor">客</div><div class="t" style="left:716.0px;top:430.5px;width:400px;color:#333;-webkit-text-stroke:0.08px currentColor">胜负</div><div class="t" style="left:754.5px;top:430.5px;width:400px;color:#333;-webkit-text-stroke:0.08px currentColor">让球</div><div class="t" style="left:803.0px;top:430.5px;width:400px;color:#333;-webkit-text-stroke:0.08px currentColor">进球数</div><div class="sel" style="left:545px;top:411px;width:59px;height:17px;"><span style="font-size:13px;line-height:17px">Crow*</span><svg width="10" height="7" viewBox="0 0 10 7" style="position:absolute;right:4px;top:5.5px"><polyline points="1,1.2 5,5.2 9,1.2" fill="none" stroke="#111" stroke-width="2.1"/></svg></div><div class="sel" style="left:613px;top:411px;width:49px;height:17px;"><span style="font-size:13px;line-height:17px">终指</span><svg width="10" height="7" viewBox="0 0 10 7" style="position:absolute;right:4px;top:5.5px"><polyline points="1,1.2 5,5.2 9,1.2" fill="none" stroke="#111" stroke-width="2.1"/></svg></div><div class="sel" style="left:733px;top:411px;width:68px;height:17px;"><span style="font-size:13px;line-height:17px">平均值</span><svg width="10" height="7" viewBox="0 0 10 7" style="position:absolute;right:4px;top:5.5px"><polyline points="1,1.2 5,5.2 9,1.2" fill="none" stroke="#111" stroke-width="2.1"/></svg></div><div class="sel" style="left:810px;top:411px;width:49px;height:17px;"><span style="font-size:13px;line-height:17px">终指</span><svg width="10" height="7" viewBox="0 0 10 7" style="position:absolute;right:4px;top:5.5px"><polyline points="1,1.2 5,5.2 9,1.2" fill="none" stroke="#111" stroke-width="2.1"/></svg></div><div class="sel" style="left:939px;top:411px;width:49px;height:17px;"><span style="font-size:13px;line-height:17px">全场</span><svg width="10" height="7" viewBox="0 0 10 7" style="position:absolute;right:4px;top:5.5px"><polyline points="1,1.2 5,5.2 9,1.2" fill="none" stroke="#111" stroke-width="2.1"/></svg></div><div class="t" style="left:-154.5px;top:453.0px;width:400px;color:#fff;-webkit-text-stroke:0.08px currentColor">奥甲</div><div class="t" style="left:-76.0px;top:453.0px;width:400px;">24-08-11</div><div class="t" style="left:16.5px;top:453.0px;width:400px;color:#187018;-webkit-text-stroke:0.08px currentColor">萨尔茨堡</div><div class="t" style="left:116.0px;top:453.0px;width:400px;"><span style="color:#c81a1a">5-1</span>(2-1)</div><div class="t" style="left:180.5px;top:453.0px;width:400px;">5-1</div><div class="t" style="left:256.0px;top:453.0px;width:400px;;-webkit-text-stroke:0.08px currentColor">BW林茨</div><div class="t" style="left:334.0px;top:453.0px;width:400px;">0.95</div><div class="t" style="left:403.5px;top:453.0px;width:400px;;-webkit-text-stroke:0.08px currentColor">球半</div><div class="t" style="left:474.0px;top:453.0px;width:400px;">0.94</div><div class="t" style="left:532.5px;top:453.0px;width:400px;">1.27</div><div class="t" style="left:603.5px;top:453.0px;width:400px;">5.73</div><div class="t" style="left:668.0px;top:453.0px;width:400px;">8.96</div><div class="t" style="left:716.0px;top:453.0px;width:400px;color:#e00000;-webkit-text-stroke:0.08px currentColor">胜</div><div class="t" style="left:754.5px;top:453.0px;width:400px;color:#e00000;-webkit-text-stroke:0.08px currentColor">赢</div><div class="t" style="left:803.0px;top:453.0px;width:400px;color:#e00000;-webkit-text-stroke:0.08px currentColor">大</div><div class="t" style="left:-154.5px;top:479.0px;width:400px;color:#fff;-webkit-text-stroke:0.08px currentColor">欧冠杯</div><div class="t" style="left:-76.0px;top:479.0px;width:400px;">24-08-07</div><div class="t" style="left:16.5px;top:479.0px;width:400px;color:#187018;-webkit-text-stroke:0.08px currentColor">萨尔茨堡</div><div class="t" style="left:116.0px;top:479.0px;width:400px;"><span style="color:#c81a1a">2-1</span>(1-0)</div><div class="t" style="left:180.5px;top:479.0px;width:400px;">5-2</div><div class="t" style="left:256.0px;top:479.0px;width:400px;;-webkit-text-stroke:0.08px currentColor">特温特</div><div class="t" style="left:334.0px;top:479.0px;width:400px;">0.91</div><div class="t" style="left:403.5px;top:479.0px;width:400px;;-webkit-text-stroke:0.08px currentColor">半/一</div><div class="t" style="left:474.0px;top:479.0px;width:400px;">0.98</div><div class="t" style="left:532.5px;top:479.0px;width:400px;">1.69</div><div class="t" style="left:603.5px;top:479.0px;width:400px;">3.89</div><div class="t" style="left:668.0px;top:479.0px;width:400px;">4.52</div><div class="t" style="left:716.0px;top:479.0px;width:400px;color:#e00000;-webkit-text-stroke:0.08px currentColor">胜</div><div class="t" style="left:754.5px;top:479.0px;width:400px;color:#e00000;-webkit-text-stroke:0.08px currentColor">赢</div><div class="t" style="left:803.0px;top:479.0px;width:400px;color:#187018;-webkit-text-stroke:0.08px currentColor">走</div><div class="t" style="left:-154.5px;top:505.0px;width:400px;color:#fff;-webkit-text-stroke:0.08px currentColor">奥甲</div><div class="t" style="left:-76.0px;top:505.0px;width:400px;">24-08-03</div><div class="t" style="left:16.5px;top:505.0px;width:400px;;-webkit-text-stroke:0.08px currentColor">格拉茨AK</div><div class="t" style="left:116.0px;top:505.0px;width:400px;"><span style="color:#c81a1a">2-3</span>(2-3)</div><div class="t" style="left:180.5px;top:505.0px;width:400px;">3-5</div><div class="t" style="left:256.0px;top:505.0px;width:400px;color:#187018;-webkit-text-stroke:0.08px currentColor">萨尔茨堡</div><div class="t" style="left:334.0px;top:505.0px;width:400px;">0.85</div><div class="t" style="left:403.5px;top:505.0px;width:400px;;-webkit-text-stroke:0.08px currentColor">受球半/两</div><div class="t" style="left:474.0px;top:505.0px;width:400px;">1.05</div><div class="t" style="left:532.5px;top:505.0px;width:400px;">7.98</div><div class="t" style="left:603.5px;top:505.0px;width:400px;">5.46</div><div class="t" style="left:668.0px;top:505.0px;width:400px;">1.30</div><div class="t" style="left:716.0px;top:505.0px;width:400px;color:#e00000;-webkit-text-stroke:0.08px currentColor">胜</div><div class="t" style="left:754.5px;top:505.0px;width:400px;color:#1414c8;-webkit-text-stroke:0.08px currentColor">输</div><div class="t" style="left:803.0px;top:505.0px;width:400px;color:#e00000;-webkit-text-stroke:0.08px currentColor">大</div><div class="t" style="left:-154.5px;top:531.0px;width:400px;color:#fff;-webkit-text-stroke:0.08px currentColor">奥地利杯</div><div class="t" style="left:-76.0px;top:531.0px;width:400px;">24-07-26</div><div class="t" style="left:16.5px;top:531.0px;width:400px;;-webkit-text-stroke:0.08px currentColor">多恩比纳</div><div class="t" style="left:116.0px;top:531.0px;width:400px;"><span style="color:#c81a1a">0-6</span>(0-4)</div><div class="t" style="left:180.5px;top:531.0px;width:400px;">3-9</div><div class="t" style="left:256.0px;top:531.0px;width:400px;color:#187018;-webkit-text-stroke:0.08px currentColor">萨尔茨堡</div><div class="t" style="left:334.0px;top:531.0px;width:400px;">1.08</div><div class="t" style="left:403.5px;top:531.0px;width:400px;;-webkit-text-stroke:0.08px currentColor">受四球</div><div class="t" style="left:474.0px;top:531.0px;width:400px;">0.62</div><div class="t" style="left:532.5px;top:531.0px;width:400px;">32.46</div><div class="t" style="left:603.5px;top:531.0px;width:400px;">14.70</div><div class="t" style="left:668.0px;top:531.0px;width:400px;">1.02</div><div class="t" style="left:716.0px;top:531.0px;width:400px;color:#e00000;-webkit-text-stroke:0.08px currentColor">胜</div><div class="t" style="left:754.5px;top:531.0px;width:400px;color:#e00000;-webkit-text-stroke:0.08px currentColor">赢</div><div class="t" style="left:803.0px;top:531.0px;width:400px;color:#e00000;-webkit-text-stroke:0.08px currentColor">大</div><div class="t" style="left:-154.5px;top:557.0px;width:400px;color:#fff;-webkit-text-stroke:0.08px currentColor">球会友谊</div><div class="t" style="left:-76.0px;top:557.0px;width:400px;">24-07-20</div><div class="t" style="left:16.5px;top:557.0px;width:400px;color:#187018;-webkit-text-stroke:0.08px currentColor">萨尔茨堡</div><div class="t" style="left:116.0px;top:557.0px;width:400px;"><span style="color:#c81a1a">4-0</span>(2-0)</div><div class="t" style="left:180.5px;top:557.0px;width:400px;">7-8</div><div class="t" style="left:256.0px;top:557.0px;width:400px;;-webkit-text-stroke:0.08px currentColor">谢周三</div><div class="t" style="left:334.0px;top:557.0px;width:400px;">0.87</div><div class="t" style="left:403.5px;top:557.0px;width:400px;;-webkit-text-stroke:0.08px currentColor">一/球半</div><div class="t" style="left:474.0px;top:557.0px;width:400px;">0.95</div><div class="t" style="left:532.5px;top:557.0px;width:400px;">1.38</div><div class="t" style="left:603.5px;top:557.0px;width:400px;">4.94</div><div class="t" style="left:668.0px;top:557.0px;width:400px;">6.03</div><div class="t" style="left:716.0px;top:557.0px;width:400px;color:#e00000;-webkit-text-stroke:0.08px currentColor">胜</div><div class="t" style="left:754.5px;top:557.0px;width:400px;color:#e00000;-webkit-text-stroke:0.08px currentColor">赢</div><div class="t" style="left:803.0px;top:557.0px;width:400px;color:#e00000;-webkit-text-stroke:0.08px currentColor">大</div><div class="t" style="left:-154.5px;top:583.0px;width:400px;color:#fff;-webkit-text-stroke:0.08px currentColor">球会友谊</div><div class="t" style="left:-76.0px;top:583.0px;width:400px;">24-07-17</div><div class="t" style="left:16.5px;top:583.0px;width:400px;color:#187018;-webkit-text-stroke:0.08px currentColor">萨尔茨堡(中)</div><div class="t" style="left:116.0px;top:583.0px;width:400px;"><span style="color:#c81a1a">1-0</span>(0-0)</div><div class="t" style="left:180.5px;top:583.0px;width:400px;">4-6</div><div class="t" style="left:256.0px;top:583.0px;width:400px;;-webkit-text-stroke:0.08px currentColor">里杰卡</div><div class="t" style="left:334.0px;top:583.0px;width:400px;">0.97</div><div class="t" style="left:403.5px;top:583.0px;width:400px;;-webkit-text-stroke:0.08px currentColor">球半</div><div class="t" style="left:474.0px;top:583.0px;width:400px;">0.85</div><div class="t" style="left:532.5px;top:583.0px;width:400px;">1.43</div><div class="t" style="left:603.5px;top:583.0px;width:400px;">4.76</div><div class="t" style="left:668.0px;top:583.0px;width:400px;">5.66</div><div class="t" style="left:716.0px;top:583.0px;width:400px;color:#e00000;-webkit-text-stroke:0.08px currentColor">胜</div><div class="t" style="left:754.5px;top:583.0px;width:400px;color:#1414c8;-webkit-text-stroke:0.08px currentColor">输</div><div class="t" style="left:803.0px;top:583.0px;width:400px;color:#1414c8;-webkit-text-stroke:0.08px currentColor">小</div><div class="t" style="left:-154.5px;top:609.0px;width:400px;color:#fff;-webkit-text-stroke:0.08px currentColor">球会友谊</div><div class="t" style="left:-76.0px;top:609.0px;width:400px;">24-07-13</div><div class="t" style="left:16.5px;top:609.0px;width:400px;color:#187018;-webkit-text-stroke:0.08px currentColor">萨尔茨堡</div><div class="t" style="left:116.0px;top:609.0px;width:400px;"><span style="color:#c81a1a">2-2</span>(2-1)</div><div class="t" style="left:180.5px;top:609.0px;width:400px;">4-3</div><div class="t" style="left:256.0px;top:609.0px;width:400px;;-webkit-text-stroke:0.08px currentColor">布拉格斯巴达</div><div class="t" style="left:334.0px;top:609.0px;width:400px;">0.98</div><div class="t" style="left:403.5px;top:609.0px;width:400px;;-webkit-text-stroke:0.08px currentColor">平/半</div><div class="t" style="left:474.0px;top:609.0px;width:400px;">0.78</div><div class="t" style="left:532.5px;top:609.0px;width:400px;">2.17</div><div class="t" style="left:603.5px;top:609.0px;width:400px;">3.70</div><div class="t" style="left:668.0px;top:609.0px;width:400px;">2.76</div><div class="t" style="left:716.0px;top:609.0px;width:400px;color:#187018;-webkit-text-stroke:0.08px currentColor">平</div><div class="t" style="left:754.5px;top:609.0px;width:400px;color:#1414c8;-webkit-text-stroke:0.08px currentColor">输</div><div class="t" style="left:803.0px;top:609.0px;width:400px;color:#e00000;-webkit-text-stroke:0.08px currentColor">大</div><div class="t" style="left:-154.5px;top:635.0px;width:400px;color:#fff;-webkit-text-stroke:0.08px currentColor">球会友谊</div><div class="t" style="left:-76.0px;top:635.0px;width:400px;">24-07-06</div><div class="t" style="left:16.5px;top:635.0px;width:400px;;-webkit-text-stroke:0.08px currentColor">库赫尔</div><div class="t" style="left:116.0px;top:635.0px;width:400px;"><span style="color:#c81a1a">1-8</span>(1-2)</div><div class="t" style="left:180.5px;top:635.0px;width:400px;">1-4</div><div class="t" style="left:256.0px;top:635.0px;width:400px;color:#187018;-webkit-text-stroke:0.08px currentColor">萨尔茨堡</div><div class="t" style="left:334.0px;top:635.0px;width:400px;"></div><div class="t" style="left:403.5px;top:635.0px;width:400px;"></div><div class="t" style="left:474.0px;top:635.0px;width:400px;"></div><div class="t" style="left:532.5px;top:635.0px;width:400px;"></div><div class="t" style="left:603.5px;top:635.0px;width:400px;"></div><div class="t" style="left:668.0px;top:635.0px;width:400px;"></div><div class="t" style="left:716.0px;top:635.0px;width:400px;color:#e00000;-webkit-text-stroke:0.08px currentColor">胜</div><div class="t" style="left:-154.5px;top:661.0px;width:400px;color:#fff;-webkit-text-stroke:0.08px currentColor">球会友谊</div><div class="t" style="left:-76.0px;top:661.0px;width:400px;">24-06-29</div><div class="t" style="left:16.5px;top:661.0px;width:400px;color:#187018;-webkit-text-stroke:0.08px currentColor">萨尔茨堡(中)</div><div class="t" style="left:116.0px;top:661.0px;width:400px;"><span style="color:#c81a1a">3-0</span>(2-0)</div><div class="t" style="left:180.5px;top:661.0px;width:400px;">8-2</div><div class="t" style="left:256.0px;top:661.0px;width:400px;;-webkit-text-stroke:0.08px currentColor">温特哈兴</div><div class="t" style="left:334.0px;top:661.0px;width:400px;"></div><div class="t" style="left:403.5px;top:661.0px;width:400px;"></div><div class="t" style="left:474.0px;top:661.0px;width:400px;"></div><div class="t" style="left:532.5px;top:661.0px;width:400px;">1.27</div><div class="t" style="left:603.5px;top:661.0px;width:400px;">5.59</div><div class="t" style="left:668.0px;top:661.0px;width:400px;">7.60</div><div class="t" style="left:716.0px;top:661.0px;width:400px;color:#e00000;-webkit-text-stroke:0.08px currentColor">胜</div><div class="t" style="left:-154.5px;top:687.0px;width:400px;color:#fff;-webkit-text-stroke:0.08px currentColor">奥甲</div><div class="t" style="left:-76.0px;top:687.0px;width:400px;">24-05-19</div><div class="t" style="left:16.5px;top:687.0px;width:400px;color:#187018;-webkit-text-stroke:0.08px currentColor">萨尔茨堡</div><div class="t" style="left:116.0px;top:687.0px;width:400px;"><span style="color:#c81a1a">7-1</span>(3-1)</div><div class="t" style="left:180.5px;top:687.0px;width:400px;">12-1</div><div class="t" style="left:256.0px;top:687.0px;width:400px;;-webkit-text-stroke:0.08px currentColor">LASK林茨</div><div class="t" style="left:334.0px;top:687.0px;width:400px;">0.85</div><div class="t" style="left:403.5px;top:687.0px;width:400px;;-webkit-text-stroke:0.08px currentColor">一/球半</div><div class="t" style="left:474.0px;top:687.0px;width:400px;">1.03</div><div class="t" style="left:532.5px;top:687.0px;width:400px;">1.36</div><div class="t" style="left:603.5px;top:687.0px;width:400px;">5.17</div><div class="t" style="left:668.0px;top:687.0px;width:400px;">6.75</div><div class="t" style="left:716.0px;top:687.0px;width:400px;color:#e00000;-webkit-text-stroke:0.08px currentColor">胜</div><div class="t" style="left:754.5px;top:687.0px;width:400px;color:#e00000;-webkit-text-stroke:0.08px currentColor">赢</div><div class="t" style="left:803.0px;top:687.0px;width:400px;color:#e00000;-webkit-text-stroke:0.08px currentColor">大</div><div class="t" style="left:318.5px;top:713.0px;width:400px;letter-spacing:0.2px">近<span class="red">10</span>场,胜9平1负0, 胜率:<span class="red">90%</span> 让胜率:<span class="red">62.5%</span> 大率:<span class="red">75%</span> 单率:<span class="red">50%</span></div>
</body></html>
